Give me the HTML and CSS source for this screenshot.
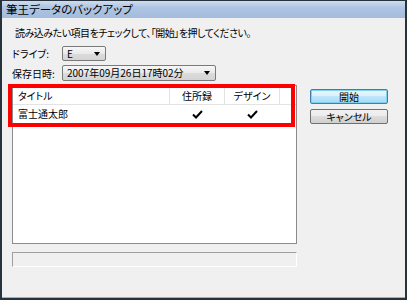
FILE: index.html
```html
<!DOCTYPE html>
<html lang="ja">
<head>
    <meta charset="UTF-8">
    <title>筆王データのバックアップ</title>
    <link rel="stylesheet" href="styles.css">
</head>
<body>
    <div class="window">
        <div class="titlebar">筆王データのバックアップ</div>
        <div class="content">
            <div class="main">
                <p class="hint">読み込みたい項目をチェックして、「開始」を押してください。</p>
                <div class="field field-drive">
                    <span class="label">ドライブ:</span>
                    <div class="combo combo-drive">E<span class="arrow"></span></div>
                </div>
                <div class="field field-date">
                    <span class="label">保存日時:</span>
                    <div class="combo combo-date">2007年09月26日17時02分<span class="arrow"></span></div>
                </div>
                <div class="list">
                    <div class="list-head">
                        <div class="col col-title">タイトル</div>
                        <div class="col col-check">住所録</div>
                        <div class="col col-check">デザイン</div>
                        <div class="col col-fill"></div>
                    </div>
                    <div class="list-row">
                        <div class="col col-title">富士通太郎</div>
                        <div class="col col-check">
                            <svg width="11" height="9" viewBox="0 0 11 9"><path d="M1 4.5 L4 7.5 L10 1" fill="none" stroke="#000" stroke-width="2"/></svg>
                        </div>
                        <div class="col col-check">
                            <svg width="11" height="9" viewBox="0 0 11 9"><path d="M1 4.5 L4 7.5 L10 1" fill="none" stroke="#000" stroke-width="2"/></svg>
                        </div>
                    </div>
                    <div class="highlight"></div>
                </div>
                <div class="status"></div>
            </div>
            <div class="side">
                <button class="btn btn-default">開始</button>
                <button class="btn">キャンセル</button>
            </div>
        </div>
    </div>
</body>
</html>
```
FILE: styles.css
```css
* {
    box-sizing: border-box;
}
body {
    margin: 0;
    font-family: "Noto Sans CJK JP", sans-serif;
    font-size: 10px;
    font-feature-settings: "palt";
    color: #000;
}
.window {
    width: 407px;
    height: 300px;
    display: flex;
    flex-direction: column;
    background: #f0f0f0;
    border: 2px solid #26323c;
    border-top-width: 1px;
}
.titlebar {
    height: 17px;
    line-height: 17px;
    padding-left: 4px;
    font-size: 11.5px;
    background: linear-gradient(#cfdcee, #adc4e2 40%, #a4bcdc);
    flex-shrink: 0;
}
.content {
    flex: 1;
    display: flex;
    padding-left: 10px;
    border-bottom: 1px solid #4cd2ea;
}
.main {
    width: 285px;
    display: flex;
    flex-direction: column;
}
.hint {
    margin: 9px 0 0 3px;
    line-height: 12px;
    letter-spacing: -0.5px;
}
.field {
    display: flex;
    align-items: center;
}
.field-drive {
    margin-top: 7px;
    height: 15px;
}
.field-date {
    margin-top: 4px;
    height: 16px;
}
.label {
    width: 50px;
}
.combo {
    position: relative;
    height: 100%;
    padding-left: 4px;
    line-height: 13px;
    border: 1px solid #7a7a7a;
    border-radius: 2px;
    background: linear-gradient(#f6f6f6, #eaeaea 50%, #dcdcdc 50%, #d4d4d4);
}
.combo-drive {
    width: 44px;
}
.combo-date {
    width: 154px;
    line-height: 14px;
}
.arrow {
    position: absolute;
    right: 5px;
    top: 50%;
    margin-top: -2px;
    border-left: 3px solid transparent;
    border-right: 3px solid transparent;
    border-top: 4px solid #000;
}
.list {
    position: relative;
    margin-top: 4px;
    height: 159px;
    background: #fff;
    border: 1px solid #8c8c8c;
}
.list-head {
    display: flex;
    height: 19px;
    line-height: 19px;
    border-bottom: 1px solid #e3e3e3;
}
.list-head .col {
    border-right: 1px solid #e3e3e3;
}
.list-row {
    display: flex;
    height: 18px;
    line-height: 18px;
}
.col-title {
    width: 157px;
    padding-left: 5px;
}
.col-check {
    width: 55px;
    display: flex;
    justify-content: center;
    align-items: center;
}
.col-fill {
    flex: 1;
}
.list-head .col-fill {
    border-right: none;
}
.highlight {
    position: absolute;
    left: -5px;
    top: -2px;
    width: 287px;
    height: 43px;
    border: 4px solid #ff0000;
}
.status {
    margin-top: 8px;
    height: 15px;
    border-top: 1px solid #a0a0a0;
    border-left: 1px solid #a0a0a0;
    border-right: 1px solid #fff;
    border-bottom: 1px solid #fff;
}
.side {
    margin-left: 13px;
    padding-top: 71px;
    display: flex;
    flex-direction: column;
    gap: 5px;
}
.btn {
    width: 78px;
    height: 15px;
    padding: 0;
    font-family: inherit;
    font-size: 10px;
    font-feature-settings: "palt";
    line-height: 13px;
    border: 1px solid #707070;
    border-radius: 2px;
    background: linear-gradient(#f2f2f2, #ebebeb 50%, #dddddd 50%, #cfcfcf);
}
.btn-default {
    border-color: #3c7fb1;
    background: linear-gradient(#eaf6fd, #d9f0fc 50%, #bee6fd 50%, #a7d9f5);
    box-shadow: inset 0 0 0 1px #7fd1ee;
}
```
